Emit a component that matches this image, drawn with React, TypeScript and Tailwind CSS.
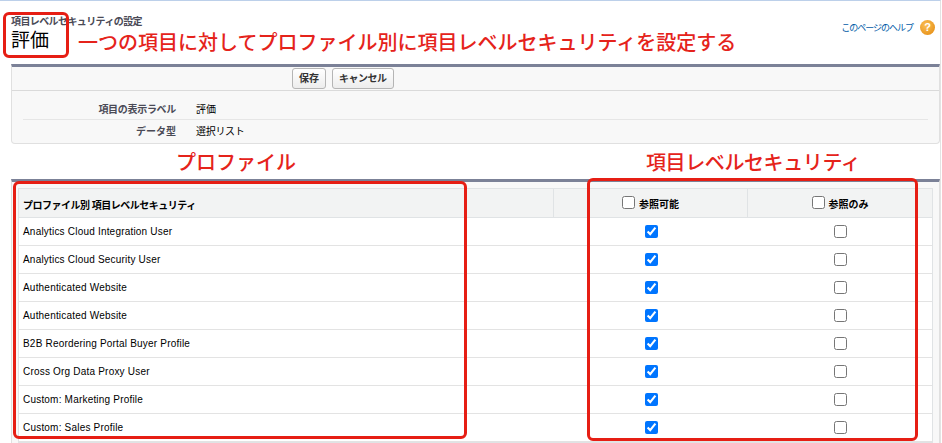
import React from 'react';

const profiles = [
  'Analytics Cloud Integration User',
  'Analytics Cloud Security User',
  'Authenticated Website',
  'Authenticated Website',
  'B2B Reordering Portal Buyer Profile',
  'Cross Org Data Proxy User',
  'Custom: Marketing Profile',
  'Custom: Sales Profile',
];

const Box = ({ className }: { className: string }) => (
  <div className={`absolute border-[3px] border-[#e61e14] rounded-[6px] pointer-events-none ${className}`} />
);

export default function App() {
  return (
    <div className="relative w-[942px] h-[443px] overflow-hidden bg-white text-black font-['Liberation_Sans','Noto_Sans_CJK_JP',sans-serif]">
      <div className="w-[941px] h-[443px] border-t border-r border-t-[#bcd0ea] border-r-[#e3e3e3]">
        {/* page header */}
        <div className="h-[63px] flex justify-between">
          <div className="pl-[11px] pt-[14px]">
            <div className="text-[10px] leading-[13px] font-bold text-[#4a4a56] tracking-[-0.6px]">項目レベルセキュリティの設定</div>
            <div className="flex items-start">
              <span className="text-[19px] leading-[20px] w-[40px] mt-[1px] font-['Noto_Sans_CJK_JP',sans-serif]">評価</span>
              <span className="ml-[27px] mt-[3px] text-[20px] leading-[22px] font-medium text-[#e5231b] font-['Noto_Sans_CJK_JP',sans-serif]">
                一つの項目に対してプロファイル別に項目レベルセキュリティを設定する
              </span>
            </div>
          </div>
          <div className="flex items-center gap-[7px] pt-[18px] pr-[5px] self-start">
            <a className="text-[9px] tracking-[-1px] text-[#015ba7] mt-[3px]">このページのヘルプ</a>
            <span className="w-[15px] h-[15px] rounded-full bg-[radial-gradient(circle_at_40%_35%,#fbc057,#e2860b)] text-white text-[11px] leading-[15px] font-bold text-center">?</span>
          </div>
        </div>

        {/* detail panel */}
        <div className="ml-[11px] w-[929px] border border-t-[3px] border-[#e0e0e0] border-t-[#7b8197] rounded-b-[4px] bg-[#f8f8f8]">
          <div className="h-[24px] border-b border-[#dadada] flex items-start pt-[1px] pl-[280px] gap-[6px]">
            <button className="h-[21px] px-[6px] border border-[#b5b5b5] rounded-[3px] bg-gradient-to-b from-white to-[#ededed] text-[10px] font-bold text-[#333]">保存</button>
            <button className="h-[21px] px-[6px] border border-[#b5b5b5] rounded-[3px] bg-gradient-to-b from-white to-[#ededed] text-[10px] font-bold text-[#333] tracking-[-0.5px]">キャンセル</button>
          </div>
          <div className="mx-[11px] h-[29px] pt-[8px] flex items-center border-b border-[#e6e6e6]">
            <span className="w-[153px] text-right text-[10px] font-bold text-[#4a4a56] tracking-[-0.3px]">項目の表示ラベル</span>
            <span className="ml-[20px] text-[10px]">評価</span>
          </div>
          <div className="mx-[11px] h-[23px] flex items-center">
            <span className="w-[153px] text-right text-[10px] font-bold text-[#4a4a56]">データ型</span>
            <span className="ml-[20px] text-[10px] tracking-[-0.3px]">選択リスト</span>
          </div>
        </div>

        {/* annotations */}
        <div className="h-[35px] flex items-center text-[20px] leading-[22px] font-medium text-[#e5231b] font-['Noto_Sans_CJK_JP',sans-serif]">
          <span className="w-[646px] pl-[176px]">プロファイル</span>
          <span className="tracking-[-0.4px]">項目レベルセキュリティ</span>
        </div>

        {/* profile table */}
        <div className="ml-[11px] w-[929px] border-t-[3px] border-[#7b8197] bg-[#f8f8f8] border-x border-x-[#e0e0e0] pt-[6px] px-[6px] h-[300px]">
          <div className="w-[915px] border border-[#e0e3e5] bg-white">
            <div className="flex h-[29px] bg-[#f2f3f3] border-b border-[#e0e3e5] text-[10px] font-bold">
              <div className="w-[535px] border-r border-[#e0e3e5] flex items-center pl-[4px] pt-[4px] tracking-[-0.5px]">プロファイル別 項目レベルセキュリティ</div>
              <div className="w-[194px] border-r border-[#e0e3e5] flex items-end justify-center pb-[6px] gap-[4px]">
                <input type="checkbox" className="m-0 w-[13px] h-[13px] mb-[2px]" />
                <span className="leading-[12px]">参照可能</span>
              </div>
              <div className="flex-1 flex items-end justify-center pb-[6px] gap-[4px]">
                <input type="checkbox" className="m-0 w-[13px] h-[13px] mb-[2px]" />
                <span className="leading-[12px]">参照のみ</span>
              </div>
            </div>
            {profiles.map((p, i) => (
              <div key={i} className="flex h-[28px] border-b border-[#e3e3e3] items-center text-[10px]">
                <div className="w-[535px] pl-[4px] tracking-[0.2px]">{p}</div>
                <div className="w-[194px] flex justify-center">
                  <input type="checkbox" defaultChecked className="m-0 w-[13px] h-[13px]" />
                </div>
                <div className="flex-1 flex justify-center">
                  <input type="checkbox" className="m-0 w-[13px] h-[13px]" />
                </div>
              </div>
            ))}
          </div>
        </div>
      </div>

      {/* red highlight boxes */}
      <Box className="left-[3px] top-[12px] w-[66px] h-[46px]" />
      <Box className="left-[13px] top-[181px] w-[454px] h-[258px]" />
      <Box className="left-[587px] top-[178px] w-[331px] h-[263px]" />
    </div>
  );
}
